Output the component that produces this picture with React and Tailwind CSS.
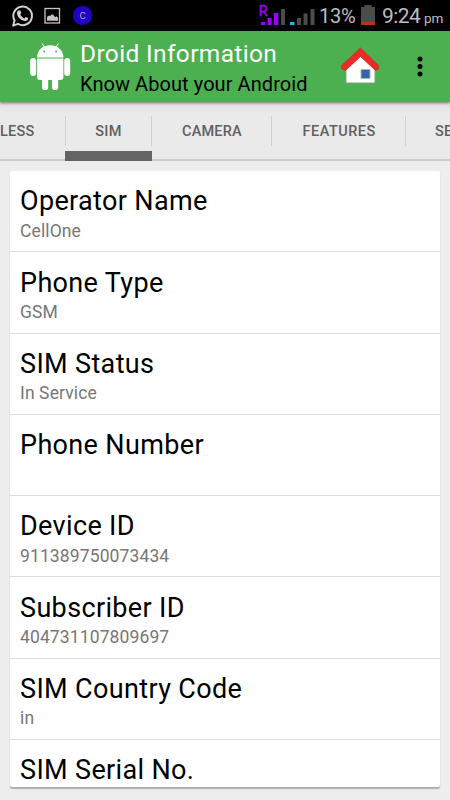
const rows = [
  ['Operator Name', 'CellOne'],
  ['Phone Type', 'GSM'],
  ['SIM Status', 'In Service'],
  ['Phone Number', ''],
  ['Device ID', '911389750073434'],
  ['Subscriber ID', '404731107809697'],
  ['SIM Country Code', 'in'],
  ['SIM Serial No.', ''],
];

function StatusBar() {
  return (
    <div className="flex h-[31px] shrink-0 items-start justify-between bg-black text-[#bdbdbd]">
      <svg width="110" height="31" viewBox="0 0 110 31" fill="none">
        <path d="M13.2 25.600l1.400-5.100A9.300 9.300 0 1 1 18 23.900z" stroke="#d0d0d0" strokeWidth="2" strokeLinejoin="round" />
        <path d="M18.600 10.300l1.600.1 1.200 2.700-1.100 1.500c1 1.900 2.200 3 4 3.800l1.400-1.500 2.500 1.200c.1 2-1.400 3-3 3-4-.3-8-4.200-8.300-7.900 0-1.300.8-2.400 1.700-2.900z" fill="#d0d0d0" />
        <rect x="45" y="8.500" width="14.500" height="14.500" stroke="#c4c4c4" strokeWidth="1.300" />
        <path d="M47 20.800v-3.500l1.500-1.500h2l1-1.200h1.500l1 1.200 1.500 1.500 1-1 1.500 1.500v3z" fill="#c4c4c4" />
        <circle cx="82.500" cy="15.500" r="9.700" fill="#2100c4" />
        <text x="82.500" y="18.500" textAnchor="middle" fontSize="9.500" fontFamily="Roboto, sans-serif" fill="#a9a0dc">C</text>
      </svg>
      <div className="flex h-[31px] items-start font-[Roboto,sans-serif]">
        <svg width="59" height="31" viewBox="257 0 59 31">
          <text x="258.800" y="16" fontSize="14.500" fontFamily="Roboto, sans-serif" fill="#a000f5" stroke="#a000f5" strokeWidth=".4">R</text>
          <path d="M261 22h4v3h-4zM267.500 18h4v7h-4zM274 13h4.300v12H274z" fill="#a000f5" />
          <path d="M281 9h4v16h-4zM297 18h4v7h-4zM303.500 13.500h4V25h-4zM310.500 9h4v16h-4z" fill="#4c4c4c" />
          <path d="M290 22h4.500v3H290z" fill="#16b5ee" />
        </svg>
        <span className="mt-[4px] w-[45px] pl-[3px] text-[20px] leading-6 tracking-[-0.2px] whitespace-nowrap">13%</span>
        <svg width="21" height="31" viewBox="0 0 21 31">
          <path d="M3.500 5h7v2H14v15H0V7h3.500z" fill="#4c4c4c" />
          <path d="M0 22h14v3H0z" fill="#c3300e" />
        </svg>
        <span className="mt-[4px] w-[42px] text-[21px] leading-6 tracking-[-0.6px] whitespace-nowrap">9:24</span>
        <span className="mt-[6px] w-[26px] text-[13.500px] leading-6 tracking-[-0.2px] whitespace-nowrap">pm</span>
      </div>
    </div>
  );
}

function Header() {
  return (
    <header className="relative z-10 flex h-[71px] shrink-0 items-start bg-[#4caf50] shadow-[0_1px_3px_rgba(0,0,0,0.5)]">
      <svg className="ml-[30px] mt-[12px] shrink-0" width="41" height="48" viewBox="0 0 41 48" fill="#fff">
        <path d="M12 .5l3 4.500M28.400 .5l-3 4.500" stroke="#fff" strokeWidth="1" />
        <path d="M7 14.600C7 7.500 12.500 2.300 20.200 2.300S33.400 7.500 33.400 14.600z" />
        <circle cx="14.300" cy="8.500" r="1" fill="#4caf50" />
        <circle cx="26.100" cy="8.500" r="1" fill="#4caf50" />
        <path d="M7 15.600h26.400V34a3 3 0 0 1-3 3H10a3 3 0 0 1-3-3z" />
        <rect x="0.200" y="14.900" width="6" height="18" rx="3" />
        <rect x="34.200" y="14.900" width="6" height="18" rx="3" />
        <rect x="12" y="30" width="6.200" height="17" rx="2.800" />
        <rect x="22" y="30" width="6.200" height="17" rx="2.800" />
      </svg>
      <div className="ml-[9px] w-[261px] whitespace-nowrap">
        <h1 className="mt-[8px] text-[24.500px] leading-[30px] font-normal tracking-[0.35px] text-white">Droid Information</h1>
        <p className="text-[20px] leading-[30px] tracking-[0.07px] text-black">Know About your Android</p>
      </div>
      <svg className="mt-[15px] shrink-0" width="39" height="40" viewBox="341 46 39 40">
        <path d="M346 65l14.500-12L375 65v18h-29z" fill="#fff" stroke="#8d9e87" strokeWidth="1" />
        <path d="M341.500 65.500L360.500 48l18 17.500v3.500l-3 1.500-15-14-15 14-4-2z" fill="#ee2926" stroke="#b33a25" strokeWidth=".8" strokeLinejoin="round" />
        <path d="M361 69.500h9v9h-9z" fill="#3465a4" stroke="#a9b8a9" strokeWidth="1" />
      </svg>
      <svg className="ml-[35px] mt-[25px] shrink-0" width="10" height="22" viewBox="0 0 10 22">
        <circle cx="5" cy="3" r="2.500" />
        <circle cx="5" cy="10.500" r="2.500" />
        <circle cx="5" cy="18" r="2.500" />
      </svg>
    </header>
  );
}

function Divider() {
  return <span className="mt-[14px] h-[30px] w-px shrink-0 bg-[#d0d0d0]" />;
}

function Tabs() {
  return (
    <nav className="flex h-[59px] shrink-0 overflow-hidden bg-gradient-to-b from-[#e2e2e2] via-[#eaeaea] via-20% to-[#eaeaea] text-[14.500px] leading-[60px] font-medium tracking-[0.25px] whitespace-nowrap text-[#606060] shadow-[inset_0_-2px_0_#cbcbcb]">
      <span className="w-[65px] shrink-0">LESS</span>
      <span className="flex h-[59px] w-[87px] shrink-0 flex-col">
        <span className="flex h-[49px] justify-between"><Divider /><span>SIM</span><Divider /></span>
        <span className="h-[10px] bg-[#646464]" />
      </span>
      <span className="w-[119px] shrink-0 pl-[30px] tracking-[0.2px]">CAMERA</span>
      <Divider />
      <span className="w-[133px] shrink-0 pl-[30.500px] tracking-[0.5px]">FEATURES</span>
      <Divider />
      <span className="pl-[29px]">SENSORS</span>
    </nav>
  );
}

export default function App() {
  return (
    <div className="flex h-[800px] w-[450px] flex-col overflow-hidden bg-[#ededed] font-[Roboto,sans-serif]">
      <StatusBar />
      <Header />
      <Tabs />
      <main className="mx-[10px] mt-[10px] h-[616px] overflow-hidden rounded-[2px] bg-white shadow-[0_2px_1px_#b0b0b0]">
        {rows.map(([title, value]) => (
          <section key={title} className="h-[81.250px] border-b border-[#dddddd] pt-[14.400px] pl-[10px] whitespace-nowrap">
            <h2 className="text-[27px] leading-8 font-normal tracking-[0.35px] text-black">{title}</h2>
            <p className="mt-[2.600px] text-[17.500px] leading-[22px] tracking-[0.12px] text-[#777777]">{value}</p>
          </section>
        ))}
      </main>
    </div>
  );
}
